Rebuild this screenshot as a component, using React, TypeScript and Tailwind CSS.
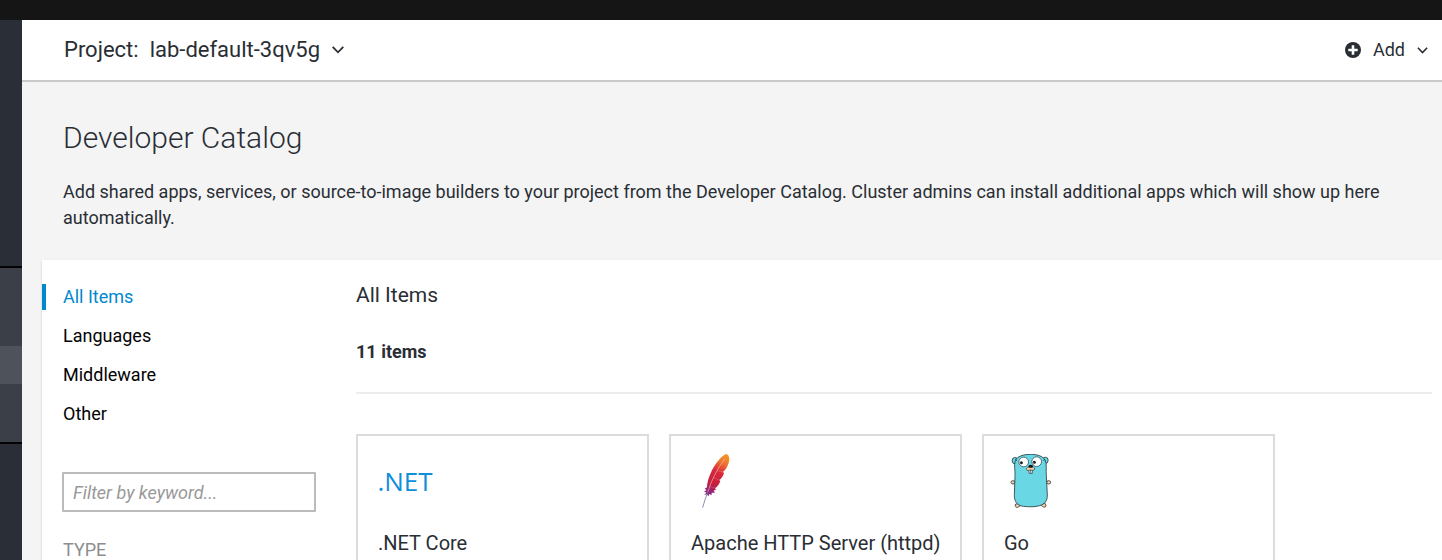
import type { ReactNode } from "react";

function PlusCircleIcon() {
  return (
    <svg viewBox="0 0 16 16" className="size-4" aria-hidden="true">
      <circle cx="8" cy="8" r="8" fill="#292e34" />
      <path d="M8 3.3v9.4M3.300 8h9.400" stroke="#fff" strokeWidth="2.6" />
    </svg>
  );
}

function Chevron({ className }: { className: string }) {
  return (
    <svg viewBox="0 0 12 8" className={className} fill="none" stroke="#292e34" strokeWidth="1.8" aria-hidden="true">
      <path d="M0.7 0.9 6 6.3 11.3 0.9" />
    </svg>
  );
}

function FeatherLogo() {
  return (
    <svg viewBox="66 87 162 162" className="size-[54px]" aria-hidden="true">
      <defs>
        <linearGradient id="feather" gradientUnits="userSpaceOnUse" x1="176" y1="88" x2="108" y2="214">
          <stop offset="0" stopColor="#f79a23" />
          <stop offset="0.2" stopColor="#ee7530" />
          <stop offset="0.42" stopColor="#d9273a" />
          <stop offset="0.7" stopColor="#c4203f" />
          <stop offset="0.84" stopColor="#9b2372" />
          <stop offset="1" stopColor="#6a2c87" />
        </linearGradient>
      </defs>
      <path
        d="M173 87C166 88 158 95 149 106C139 117 130 133 123 149C117 163 114 176 114 187L107 191L113 196L105 199L112 203L106 210L114 208L118 214L121 207L128 210L128 203L138 203L134 197L142 193L138 190C145 186 151 177 154 168L151 165C158 161 162 153 165 144L162 140C170 135 175 126 179 114C182 104 182 91 173 87Z"
        fill="url(#feather)"
      />
      <path d="M167 102C145 132 128 163 116 202" stroke="#f7c9bd" strokeWidth="2.2" fill="none" opacity="0.8" />
      <path d="M116 202C110 217 105 232 101 248" stroke="#8a79ae" strokeWidth="2.6" fill="none" />
      <path d="M144 137 165 142M134 158 152 166M123 185 140 190" stroke="#fff" strokeWidth="1" opacity="0.5" />
    </svg>
  );
}

function GopherLogo() {
  return (
    <svg viewBox="72 72 162 162" className="size-[54px]" aria-hidden="true">
      <g stroke="#26343a" strokeWidth="2.4">
        <ellipse cx="105" cy="92" rx="8.5" ry="9.5" fill="#6ad7e5" />
        <ellipse cx="196" cy="91" rx="8.5" ry="9.5" fill="#6ad7e5" />
        <ellipse cx="99" cy="157" rx="6" ry="5" fill="#f6d2a2" />
        <ellipse cx="206" cy="157" rx="6" ry="5" fill="#f6d2a2" />
        <path d="M107 222C104 228 106 233 112 232C118 230 124 226 122 221Z" fill="#f6d2a2" />
        <path d="M196 221C200 228 197 233 191 231C185 229 181 225 183 220Z" fill="#f6d2a2" />
        <path
          d="M152 73C130 73 111 79 106 92C101 106 106 120 105 137L103 196C103 220 117 228 131 229C147 231 166 231 179 227C194 222 202 214 202 195L199 137C197 119 202 105 195 90C189 78 170 73 152 73Z"
          fill="#6ad7e5"
        />
      </g>
      <g stroke="#26343a" strokeWidth="2">
        <circle cx="131" cy="96" r="14.5" fill="#fff" />
        <circle cx="170" cy="95" r="14.5" fill="#fff" />
        <path d="M147 119V130H157V119Z" fill="#fff" />
        <path d="M152 120V130" />
        <path d="M151 111C143 110 137 115 140 120C144 124 149 119 153 120C157 121 162 122 164 118C165 112 158 110 151 111Z" fill="#f6d2a2" />
      </g>
      <ellipse cx="152" cy="109" rx="7" ry="4.5" fill="#111" />
      <circle cx="124" cy="98" r="4.5" fill="#111" />
      <circle cx="163" cy="97" r="4.5" fill="#111" />
      <path d="M107 88 110 93M194 87 191 92" stroke="#26343a" strokeWidth="2.5" />
      <circle cx="122.5" cy="99" r="1.2" fill="#fff" />
      <circle cx="161.5" cy="98" r="1.2" fill="#fff" />
    </svg>
  );
}

const categories = ["All Items", "Languages", "Middleware", "Other"];

const items: { name: string; logo: ReactNode }[] = [
  {
    name: ".NET Core",
    logo: (
      <span className="font-['Open_Sans','Noto_Sans',sans-serif] text-[26px] leading-none text-[#0e8fdc]" aria-hidden="true">
        .NET
      </span>
    ),
  },
  { name: "Apache HTTP Server (httpd)", logo: <FeatherLogo /> },
  { name: "Go", logo: <GopherLogo /> },
];

function NavRail() {
  return (
    <div className="flex w-[22px] shrink-0 flex-col bg-[#292e37]">
      <div className="h-[246px]" />
      <div className="border-y-2 border-[#030303] bg-[#3b3f47] pt-[78px] pb-[58px]">
        <div className="h-[38px] bg-[#4e525a]" />
      </div>
    </div>
  );
}

export default function App() {
  return (
    <div className="flex h-screen flex-col overflow-hidden bg-[#f4f4f4] font-[Roboto,'Liberation_Sans',sans-serif] text-lg text-[#292e34]">
      <div className="h-5 shrink-0 bg-[#151515]" />
      <div className="flex min-h-0 flex-1">
        <NavRail />
        <div className="min-w-0 flex-1">
          <header className="flex h-[62px] items-center justify-between border-b-2 border-[#c9c9c9] bg-white pr-[14px] pl-[42px]">
            <button type="button" className="flex items-center text-[22px]">
              <span>Project:</span>
              <span className="ml-[11px]">lab-default-3qv5g</span>
              <Chevron className="ml-3 h-2 w-3" />
            </button>
            <button type="button" className="flex items-center">
              <PlusCircleIcon />
              <span className="ml-3">Add</span>
              <Chevron className="ml-3 h-[7px] w-[11px]" />
            </button>
          </header>

          <div className="pr-5 pb-[29px] pl-[41px] pt-9">
            <h1 className="text-[30px] leading-10 font-light">Developer Catalog</h1>
            <p className="mt-[21px] leading-[26px]">
              Add shared apps, services, or source-to-image builders to your project from the Developer Catalog. Cluster
              admins can install additional apps which will show up here automatically.
            </p>
          </div>

          <div className="ml-5 flex bg-white pt-6 shadow-[0_1px_2px_rgba(3,3,3,0.2)]">
            <aside className="w-[274px] shrink-0">
              <nav>
                <ul className="flex flex-col gap-[13px] leading-[26px]">
                  {categories.map((category, index) => (
                    <li key={category}>
                      <a
                        href="#"
                        className={
                          index === 0
                            ? "block border-l-4 border-[#0088ce] pl-[17px] text-[#0088ce]"
                            : "block border-l-4 border-transparent pl-[17px] text-[#030303]"
                        }
                      >
                        {category}
                      </a>
                    </li>
                  ))}
                </ul>
              </nav>
              <input
                type="text"
                aria-label="Filter by keyword"
                placeholder="Filter by keyword..."
                className="mt-[45px] ml-5 block h-10 w-[254px] rounded-[1px] border-2 border-[#bbb] bg-white px-[9px] placeholder:text-[#999] placeholder:italic"
              />
              <h2 className="mt-[25px] ml-[21px] leading-[26px] text-[#8b8d8f]">TYPE</h2>
            </aside>

            <main className="ml-10 min-w-0 flex-1 pr-[10px]">
              <h2 className="text-[21px] leading-[22px]">All Items</h2>
              <p className="mt-[33px] leading-[26px] font-bold">11 items</p>
              <div className="mt-[27px] grid grid-cols-[repeat(auto-fill,293px)] gap-5 border-t-2 border-[#ededed] pt-10">
                {items.map((item) => (
                  <a key={item.name} href="#" className="block h-[260px] border-2 border-[#dcdcdc] bg-white px-5 pt-[18px]">
                    <div className="flex h-[54px] w-[54px] items-center justify-center">{item.logo}</div>
                    <div className="mt-[22px] text-xl leading-[26px] whitespace-nowrap">{item.name}</div>
                  </a>
                ))}
              </div>
            </main>
          </div>
        </div>
      </div>
    </div>
  );
}
